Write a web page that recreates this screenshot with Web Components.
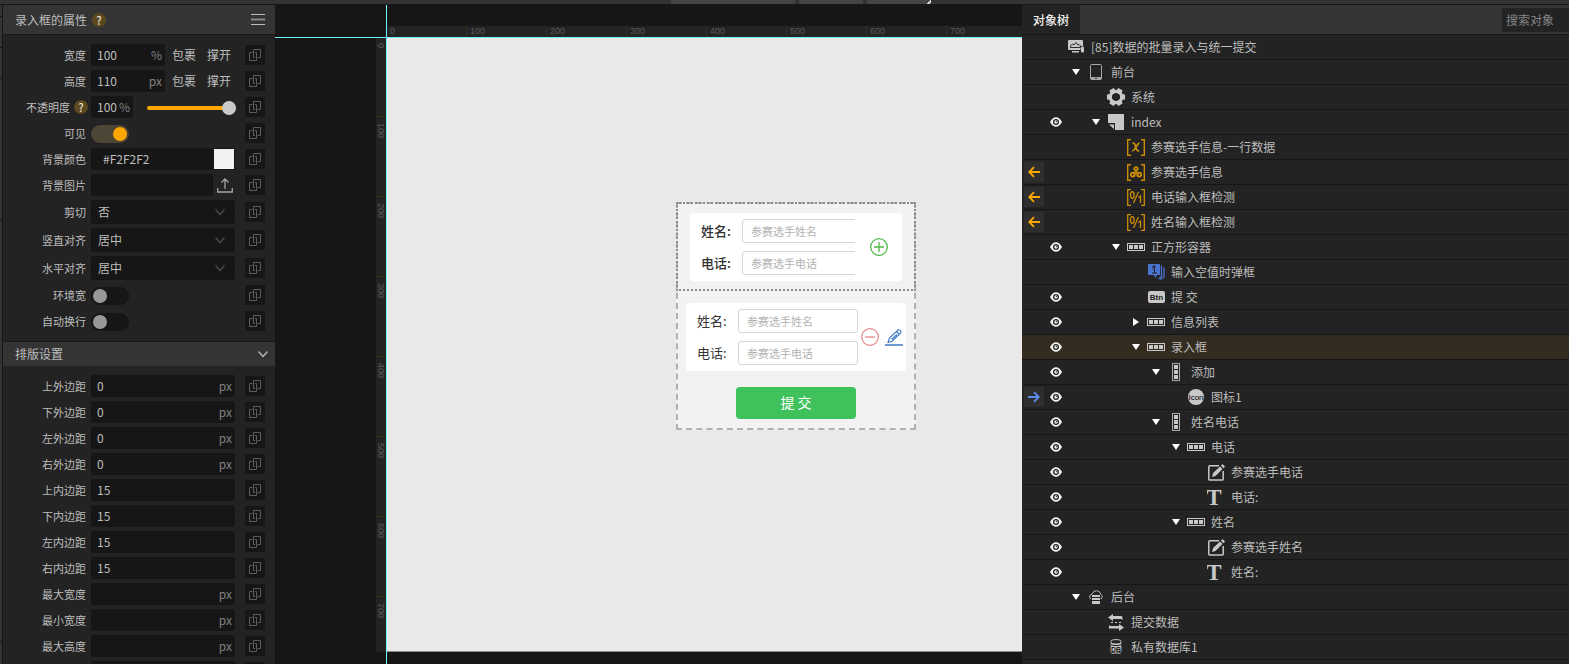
<!DOCTYPE html>
<html lang="zh-CN">
<head>
<meta charset="utf-8">
<title>对象树编辑器</title>
<style>
  html, body { margin: 0; height: 100%; }
  body {
    font: 12px/18px "Noto Sans CJK SC", sans-serif;
    color: #bdbdbd; background: #161616; overflow: hidden;
    --panel: #232323; --bar: #343434; --dark: #161616; --accent: #fba700;
  }
</style>
</head>
<body>
<editor-app></editor-app>

<script>
const ICONS = {
  link: [12, 12, '<g fill="none" stroke="#5c5c5c"><path d="M3.500 3.500h-3v8h7v-8H6"/><path d="M8.500 8.500h3v-8h-7v8H6"/></g>'],
  menu: [14, 11, '<path d="M0 .5h14M0 10.500h14" stroke="#bbb"/><path d="M0 5.500h14" stroke="#888" stroke-width="2"/>'],
  chevron: [12, 7, '<path d="M1.500 .5L6 5.500 10.500 .5" fill="none" stroke="currentColor" stroke-width="1.200"/>'],
  upload: [16, 15, '<path d="M.7 10v4h14.600v-4M8 11V1M4.500 4.500L8 1l3.500 3.500" fill="none" stroke="#a5a5a5" stroke-width="1.300"/>'],
  down: [8, 6, '<path d="M0 0h8L4 6z" fill="#fff"/>'],
  right: [6, 8, '<path d="M0 0v8l6-4z" fill="#fff"/>'],
  eye: [12, 10, '<path d="M0 5Q2.500.3 6 .3T12 5Q9.500 9.700 6 9.700T0 5z" fill="#f4f4f4"/><circle cx="6" cy="5" r="3" fill="#232323"/><circle cx="6" cy="5" r="1.700" fill="#f4f4f4"/><circle cx="6.400" cy="4.600" r=".6" fill="#232323"/>'],
  left: [12, 12, '<path d="M12 6H1.500M6 1.200L1.200 6 6 10.800" fill="none" stroke="#fba700" stroke-width="1.800"/>'],
  go: [12, 12, '<path d="M0 6h10.500M6 1.200L10.800 6 6 10.800" fill="none" stroke="#5b8cf0" stroke-width="1.800"/>'],
  app: [16, 14, '<path d="M1 0h13q1 0 1 1v5h-2.500v4H1q-1 0-1-1V1q0-1 1-1zM4 11h7v1.500H4z" fill="#c8c8c8"/><rect x="13" y="6.500" width="3" height="6" rx="1" fill="#c8c8c8"/><path d="M2.500 7.500V6l2-2L6 5 8 2.500l2 2.500L11 4.500 12.500 6v1.500z" fill="none" stroke="#2a2a2a"/>'],
  phone: [12, 16, '<rect x=".5" y=".5" width="11" height="15" rx="1" fill="none" stroke="#a8a8a8"/><path d="M1 13h10v2.500H1z" fill="#a8a8a8"/><circle cx="6" cy="14.300" r=".8" fill="#222"/>'],
  gear: [18, 18, '<g fill="#c8c8c8"><path d="M6.500 0h5l.5 5H6zM6.500 18h5l.5-5H6z" transform="rotate(30 9 9)"/><path d="M6.500 0h5l.5 5H6zM6.500 18h5l.5-5H6z" transform="rotate(90 9 9)"/><path d="M6.500 0h5l.5 5H6zM6.500 18h5l.5-5H6z" transform="rotate(150 9 9)"/></g><circle cx="9" cy="9" r="5.700" fill="none" stroke="#c8c8c8" stroke-width="3.200"/>'],
  page: [16, 16, '<path d="M0 0h16v16H7V9H0z" fill="#c8c8c8"/><path d="M1 10.500h5V15z" fill="#c8c8c8"/>'],
  varx: [18, 17, '<g fill="none" stroke="#cc8c0a" stroke-width="1.400"><path d="M4 .7H.7v15.600H4M14 .7h3.300v15.600H14"/><path d="M5.500 4.500c2-1 2.600 1 3.200 3.500s1.500 4.500 3.500 3.500M12.500 4.200C10 4.500 8 12 5.200 11.800" stroke-width="1.700"/></g>'],
  varo: [18, 17, '<g fill="none" stroke="#cc8c0a" stroke-width="1.400"><path d="M4 .7H.7v15.600H4M14 .7h3.300v15.600H14"/><g stroke-width="1.800"><circle cx="9" cy="4.800" r="1.700"/><circle cx="5.800" cy="10.600" r="2"/><circle cx="12.200" cy="10.600" r="2"/><path d="M9 6v3M9 8l-3 2M9 8l3 2"/></g></g>'],
  bool: [18, 17, '<g fill="none" stroke="#cc8c0a" stroke-width="1.300"><path d="M4 .7H.7v15.600H4M14 .7h3.300v15.600H14"/><ellipse cx="5.300" cy="6" rx="1.800" ry="3.300"/><path d="M11.500 3L6.500 14M11.500 8.500l2-1.500v7"/></g>'],
  row: [18, 8, '<rect x=".5" y=".5" width="17" height="7" fill="none" stroke="#c8c8c8"/><path d="M2 2h4v4H2zM7 2h4v4H7zM12 2h4v4h-4z" fill="#c8c8c8"/>'],
  col: [8, 18, '<rect x=".5" y=".5" width="7" height="17" fill="none" stroke="#aaa"/><path d="M2 2h4v4H2zM2 7h4v4H2zM2 12h4v4H2z" fill="#c8c8c8"/>'],
  pop: [17, 16, '<path d="M0 0h12v11H9l-1.500 3L6 11H0z" fill="#4a74cf"/><path d="M13.500 1.500v11l-3 2.500M16 3.500v9.500l-4 2.500" fill="none" stroke="#4a74cf" stroke-width="1.300"/><path d="M5 2h2v1.500H5zM4.500 5h2v4M4 9h5" fill="none" stroke="#222"/>'],
  btn: [17, 12, '<rect width="17" height="12" rx="2" fill="#c8c8c8"/><text x="8.500" y="9" font-size="8" font-weight="700" text-anchor="middle" fill="#222" font-family="Liberation Sans">Btn</text>'],
  icon: [16, 16, '<circle cx="8" cy="8" r="8" fill="#c8c8c8"/><text x="8" y="11" font-size="8" text-anchor="middle" fill="#000" font-family="Liberation Sans">Icon</text>'],
  edit: [17, 17, '<path d="M11 1.700H2q-1.200 0-1.200 1.200v12q0 1.200 1.200 1.200h12q1.200 0 1.200-1.200V7" fill="none" stroke="#c8c8c8" stroke-width="1.500"/><path d="M4 13l1-4 7-6.500 2.500 2.500-7 7zM13 1.700L14.500 0 17 2.500l-1.500 1.700z" fill="#c8c8c8"/>'],
  text: [18, 16, '<text x="7" y="15.500" font-size="23" font-weight="700" text-anchor="middle" fill="#c8c8c8" font-family="Liberation Serif">T</text>'],
  cloud: [14, 14, '<path d="M2 9Q0 8 .8 6T3 4.300Q4 .7 7.500.7T12 4.500Q14 6 13 8l-1.500 1" fill="none" stroke="#b5b5b5"/><path d="M3 5h8v2H3zM3 8h8v2H3zM3 11h8v3H3z" fill="#c8c8c8"/>'],
  swap: [16, 17, '<path d="M0 3.500L5 0v2h8q1.500 0 1.500 1.500V6L13 5H5v2zM16 13.500l-5-3.500v2H3q-1.500 0-2-1v3.500h10V17z" fill="#c8c8c8"/><path d="M3 8.500h2M7 8.500h2M11 8.500h2" stroke="#c8c8c8"/>'],
  db: [12, 16, '<rect x=".6" y="3" width="10.800" height="12" rx="2" fill="#c8c8c8"/><ellipse cx="6" cy="2.800" rx="5.200" ry="2.200" fill="#232323" stroke="#c8c8c8"/><path d="M0 6q6 1.200 12 0M0 13.500q6 1.200 12 0" fill="none" stroke="#232323"/><text x="6" y="12.500" font-size="7" font-weight="700" text-anchor="middle" fill="#111" font-family="Liberation Sans">DB</text>'],
  plus: [18, 18, '<circle cx="9" cy="9" r="8.300" fill="none" stroke="#4db748" stroke-width="1.300"/><path d="M9 4v10M4 9h10" stroke="#4db748" stroke-width="1.300"/>'],
  minus: [18, 18, '<circle cx="9" cy="9" r="8.300" fill="none" stroke="#e58686" stroke-width="1.200"/><path d="M4 9h10" stroke="#e58686" stroke-width="1.300"/>'],
  pencil: [18, 17, '<g fill="none" stroke="#3878c0" stroke-width="1.100"><path d="M3 13.500l1.500-4.500 8.500-8Q14 .3 15.300 1.400T15.500 4.200l-8.500 8zM11.500 2.500l2.500 2.500M12 5.500L6.500 10.500"/><path d="M0 16h18" stroke-width="1.500"/></g>']
};

function define(name, css, render) {
  customElements.define(name, class extends HTMLElement {
    constructor() {
      super();
      this.attachShadow({ mode: 'open' });
    }
    connectedCallback() {
      const tpl = document.createElement('template');
      tpl.innerHTML = `<style>*{box-sizing:border-box}button,input,select{font:inherit;color:inherit;margin:0;border:0;outline:0;background:none;padding:0}${css}</style>${render(this)}`;
      this.shadowRoot.replaceChildren(tpl.content.cloneNode(true));
    }
  });
}

define('ui-icon', ':host{display:inline-flex;flex:none}svg{display:block}', el => {
  const [w, h, body] = ICONS[el.getAttribute('name')];
  return `<svg width="${w}" height="${h}" viewBox="0 0 ${w} ${h}" aria-hidden="true">${body}</svg>`;
});

define('help-dot', `
  :host{display:inline-grid;place-items:center;width:14px;height:14px;border-radius:50%;
    background:#5c491f;color:#f0e8d8;font-size:11px;line-height:14px;font-weight:500;flex:none}`,
  () => '?');

define('prop-row', `
  :host{display:grid;grid-template-columns:83px 5px 144px 10px 20px;align-items:center;height:22px}
  :host([kind=select]){height:24px}
  label.name{display:flex;justify-content:flex-end;align-items:center;gap:4px;font-size:11px;line-height:22px}
  help-dot{margin-right:-2px}
  .ctl{grid-column:3;display:flex;align-items:center;height:100%}
  .field{display:flex;align-items:center;height:100%;flex:1;min-width:0;background:#161616;border-radius:2px;padding:0 3px 0 6px}
  .field.w74{flex:0 0 74px}.field.w42{flex:0 0 42px}.field.w122{flex:0 0 122px}
  .field input[type=text]{flex:1;width:0;min-width:0;height:20px;padding-bottom:2px}
  .unit{color:#808080}
  .color{padding:0 1px 0 12px}
  input[type=color]{width:20px;height:20px;appearance:none}
  input[type=color]::-webkit-color-swatch-wrapper{padding:0}
  input[type=color]::-webkit-color-swatch{border:0}
  .fit{margin-left:7px}.fit + .fit{margin-left:11px}
  ui-icon.up{margin-left:4px}
  .pick{display:grid;width:100%;height:24px;align-items:center}
  .pick select{grid-area:1/1;width:100%;height:24px;appearance:none;background:#161616;border-radius:2px;padding:0 7px}
  .pick ui-icon{grid-area:1/1;justify-self:end;margin-right:9px;color:#4c4c4c;pointer-events:none}
  .switch{appearance:none;width:38px;height:18px;margin-top:2px;border-radius:9px;background:#161616;padding:2px;display:flex}
  .switch::before{content:"";width:14px;height:14px;border-radius:50%;background:#999}
  .switch:checked{background:#4d4536;justify-content:flex-end}
  .switch:checked::before{background:var(--accent)}
  .range{appearance:none;width:89px;height:14px;margin:2px 0 0 14px}
  .range::-webkit-slider-runnable-track{height:4px;border-radius:2px;background:var(--accent)}
  .range::-webkit-slider-thumb{appearance:none;width:14px;height:14px;margin-top:-5px;border-radius:50%;background:#c9c9c9}
  .link{grid-column:5;width:20px;height:20px;background:#161616;display:grid;place-items:center}`,
  el => {
    const a = n => el.getAttribute(n) || '';
    const label = a('label'), value = a('value');
    const unit = a('unit') ? `<span class="unit">${a('unit')}</span>` : '';
    const text = (cls = '') => `<span class="field ${cls}"><input id="c" type="text" value="${value}">${unit}</span>`;
    const kinds = {
      size: () => text('w74') + '<button class="fit">包裹</button><button class="fit">撑开</button>',
      opacity: () => text('w42') + '<input class="range" type="range" value="100" aria-label="不透明度">',
      toggle: () => `<input id="c" class="switch" type="checkbox" ${value ? 'checked' : ''}>`,
      color: () => `<span class="field color"><input id="c" type="text" value="${value}"><input type="color" value="${value}" aria-label="${label}"></span>`,
      image: () => text('w122') + '<ui-icon class="up" name="upload"></ui-icon>',
      select: () => `<span class="pick"><select id="c"><option>${value}</option></select><ui-icon name="chevron"></ui-icon></span>`
    };
    return `<label class="name" for="c">${label}${a('kind') === 'opacity' ? '<help-dot></help-dot>' : ''}</label>
      <span class="ctl">${(kinds[a('kind')] || text)()}</span>
      <button class="link" aria-label="绑定"><ui-icon name="link"></ui-icon></button>`;
  });

define('prop-section', `
  :host{display:block}
  header{display:flex;justify-content:space-between;align-items:center;height:var(--head,24px);padding:0 var(--end,6px) 0 12px;background:var(--bar);border:solid var(--dark);border-width:var(--line,1px 0 0);box-sizing:content-box}
  .t{display:flex;align-items:center;gap:5px}
  .rows{display:flex;flex-direction:column;gap:4px;padding:9px 0}`,
  () => '<header><span class="t"><slot name="title"></slot></span><slot name="action"></slot></header><div class="rows"><slot></slot></div>');

const margins = ['上外边距', '下外边距', '左外边距', '右外边距'];
const paddings = ['上内边距', '下内边距', '左内边距', '右内边距'];
const limits = ['最大宽度', '最小宽度', '最大高度', '最小高度'];

define('prop-panel', `
  :host{display:block;background:var(--panel);overflow:hidden}
  .first{--head:29px;--line:0 0 1px;--end:10px}`,
  () => `<prop-section class="first">
      <span slot="title">录入框的属性</span><help-dot slot="title"></help-dot>
      <ui-icon slot="action" name="menu"></ui-icon>
      <prop-row label="宽度" kind="size" value="100" unit="%"></prop-row>
      <prop-row label="高度" kind="size" value="110" unit="px"></prop-row>
      <prop-row label="不透明度" kind="opacity" value="100" unit="%"></prop-row>
      <prop-row label="可见" kind="toggle" value="on"></prop-row>
      <prop-row label="背景颜色" kind="color" value="#F2F2F2"></prop-row>
      <prop-row label="背景图片" kind="image"></prop-row>
      <prop-row label="剪切" kind="select" value="否"></prop-row>
      <prop-row label="竖直对齐" kind="select" value="居中"></prop-row>
      <prop-row label="水平对齐" kind="select" value="居中"></prop-row>
      <prop-row label="环境宽" kind="toggle"></prop-row>
      <prop-row label="自动换行" kind="toggle"></prop-row>
    </prop-section>
    <prop-section>
      <span slot="title">排版设置</span><ui-icon slot="action" name="chevron"></ui-icon>
      ${margins.map(n => `<prop-row label="${n}" value="0" unit="px"></prop-row>`).join('')}
      ${paddings.map(n => `<prop-row label="${n}" value="15"></prop-row>`).join('')}
      ${limits.map(n => `<prop-row label="${n}" unit="px"></prop-row>`).join('')}
    </prop-section>`);

define('ruler-bar', `
  :host{display:flex;overflow:hidden;background:var(--panel);color:#5c5c5c;font:9px/11px "Liberation Sans",sans-serif}
  span{flex:0 0 80px;border-right:1px solid #3a2e1c;padding-left:3px;
    background:repeating-linear-gradient(90deg,transparent 0 7px,#2e2e2e 7px 8px) bottom/100% 2px no-repeat}
  :host([vertical]){flex-direction:column;line-height:10px}
  :host([vertical]) span{writing-mode:vertical-rl;border:0;border-bottom:1px solid #3a2e1c;padding:6px 0 0;
    background:repeating-linear-gradient(180deg,transparent 0 7px,#2e2e2e 7px 8px) right/2px 100% no-repeat}`,
  el => Array.from({ length: +el.getAttribute('count') }, (_, i) => `<span>${i * 100}</span>`).join(''));

define('entry-card', `
  :host{display:flex;width:220px;height:68px;background:#fff;border-radius:4px;color:#333;font-size:13px}
  .lines{flex:none;width:172px;padding:6px 0 6px 11px;display:grid;gap:8px;overflow:hidden}
  :host([clipped]){width:212px;font-weight:500}
  :host([clipped]) .lines{width:165px}
  .line{display:flex;align-items:center;width:161px}
  label{width:41px;line-height:24px}
  input{width:120px;height:24px;border:1px solid #d6d6d6;border-radius:3px;padding:0 8px;font-size:11px;font-weight:400}
  input::placeholder{color:#b2b2b2}
  .acts{flex:1;display:flex;align-items:center;justify-content:center;gap:6px}`,
  () => `<div class="lines">
      <div class="line"><label for="n">姓名:</label><input id="n" placeholder="参赛选手姓名"></div>
      <div class="line"><label for="p">电话:</label><input id="p" placeholder="参赛选手电话"></div>
    </div><div class="acts"><slot></slot></div>`);

define('canvas-area', `
  :host{display:grid;grid-template:21px 11px 1px 1fr 12px / 101px 10px 1px 1fr;background:var(--dark);overflow:hidden}
  .top{grid-area:2/4}.side{grid-area:3/2/5/3}
  .h{grid-area:3/1/4/-1;background:#6ff5f8}.v{grid-area:1/3/-1/4;background:#6ff5f8}
  .stage{grid-area:4/4;background:#e9e9e9;border-bottom:1px solid #8a8a8a;padding:164px 0 0 289px}
  .box{width:240px;background:#f2f2f2;border:2px dashed #b0b0b0;padding-bottom:9px;display:flex;flex-direction:column;align-items:center}
  .entry{width:240px;height:89px;margin:-2px -2px 12px;border:2px dotted #8a8a8a;padding:9px 12px}
  .submit{width:120px;height:32px;margin-top:16px;padding-bottom:2px;border-radius:4px;background:#3fc15c;color:#fff;font-size:14px}`,
  () => `<ruler-bar class="top" count="8"></ruler-bar><ruler-bar class="side" vertical count="8"></ruler-bar>
    <div class="h"></div><div class="v"></div>
    <main class="stage"><div class="box">
      <div class="entry"><entry-card clipped><ui-icon name="plus"></ui-icon></entry-card></div>
      <entry-card><ui-icon name="minus"></ui-icon><ui-icon name="pencil"></ui-icon></entry-card>
      <button class="submit">提 交</button>
    </div></main>`);

define('tree-row', `
  :host{display:flex;align-items:center;height:25px;border-bottom:1px solid var(--dark);padding-left:2px;white-space:pre}
  :host([selected]){background:#342c20}
  span{display:grid;place-items:center;flex:none;width:20px;height:20px}
  .badge{margin-right:2px}.badge.on{background:#2e2e2e}
  .indent{display:flex;justify-content:flex-end;align-items:center}
  .indent ui-icon{width:20px;justify-content:center}
  .kind{margin-right:5px}`,
  el => {
    const icon = n => el.hasAttribute(n) ? `<ui-icon name="${el.getAttribute(n)}"></ui-icon>` : '';
    return `<span class="badge ${el.hasAttribute('event') ? 'on' : ''}">${icon('event')}</span>
      <span>${el.hasAttribute('eye') ? '<ui-icon name="eye"></ui-icon>' : ''}</span><span class="indent" style="width:${el.getAttribute('level') * 20}px">${icon('fold')}</span><span class="kind">${icon('icon')}</span><slot></slot>`
      .replace(/>\s+</g, '><');
  });

// level, icon, label, extra attributes
const NODES = [
  [0, 'app', '[85]数据的批量录入与统一提交', ''],
  [1, 'phone', '前台', 'fold="down"'],
  [2, 'gear', '系统', ''],
  [2, 'page', 'index', 'eye fold="down"'],
  [3, 'varx', '参赛选手信息-一行数据', ''],
  [3, 'varo', '参赛选手信息', 'event="left"'],
  [3, 'bool', '电话输入框检测', 'event="left"'],
  [3, 'bool', '姓名输入框检测', 'event="left"'],
  [3, 'row', '正方形容器', 'eye fold="down"'],
  [4, 'pop', '输入空值时弹框', ''],
  [4, 'btn', '提 交', 'eye'],
  [4, 'row', '信息列表', 'eye fold="right"'],
  [4, 'row', '录入框', 'eye fold="down" selected'],
  [5, 'col', '添加', 'eye fold="down"'],
  [6, 'icon', '图标1', 'eye event="go"'],
  [5, 'col', '姓名电话', 'eye fold="down"'],
  [6, 'row', '电话', 'eye fold="down"'],
  [7, 'edit', '参赛选手电话', 'eye'],
  [7, 'text', '电话:', 'eye'],
  [6, 'row', '姓名', 'eye fold="down"'],
  [7, 'edit', '参赛选手姓名', 'eye'],
  [7, 'text', '姓名:', 'eye'],
  [1, 'cloud', '后台', 'fold="down"'],
  [2, 'swap', '提交数据', ''],
  [2, 'db', '私有数据库1', '']
];

define('tree-panel', `
  :host{display:block;background:var(--panel);overflow:hidden}
  header{display:flex;justify-content:space-between;align-items:center;height:30px;background:var(--bar);border-bottom:1px solid var(--dark)}
  .tab{height:29px;padding:0 11px;background:var(--panel);color:#f2f2f2;font-weight:500}
  .find{width:67px;height:24px;padding:0 4px;background:var(--panel)}
  .find::placeholder{color:#858585}`,
  () => `<header><button class="tab">对象树</button><input class="find" type="search" placeholder="搜索对象" aria-label="搜索对象"></header>
    ${NODES.map(([l, i, t, x]) => `<tree-row level="${l}" icon="${i}" ${x}>${t}</tree-row>`).join('')}`);

define('editor-app', `
  :host{display:grid;grid-template:4px 1fr / 3px 272px 1fr 547px;row-gap:1px;height:100vh;overflow:hidden}
  .top{grid-column:1/-1;display:flex;gap:4px;padding-left:671px;background:#333}
  .top i{width:64px;background:#454545;border-radius:0 0 2px 2px}
  .top i:first-child{width:124px}
  .top i:last-child{background:linear-gradient(135deg,transparent 50%,#ddd 50%) right bottom/4px 4px no-repeat #454545}
  .strip{display:flex;flex-direction:column;border-right:1px solid var(--dark);background:#333;overflow:hidden}
  .strip i{flex:0 0 31px;border-bottom:1px solid var(--dark)}
  .strip i:first-child{flex-basis:12px}
  .strip i:nth-child(4){flex-basis:141px}
  .strip i:nth-child(5){flex-basis:422px}`,
  () => `<div class="top"><i></i><i></i><i></i></div>
    <div class="strip"><i></i><i></i><i></i><i></i><i></i></div>
    <prop-panel></prop-panel><canvas-area></canvas-area><tree-panel></tree-panel>`);
</script>
</body>
</html>
